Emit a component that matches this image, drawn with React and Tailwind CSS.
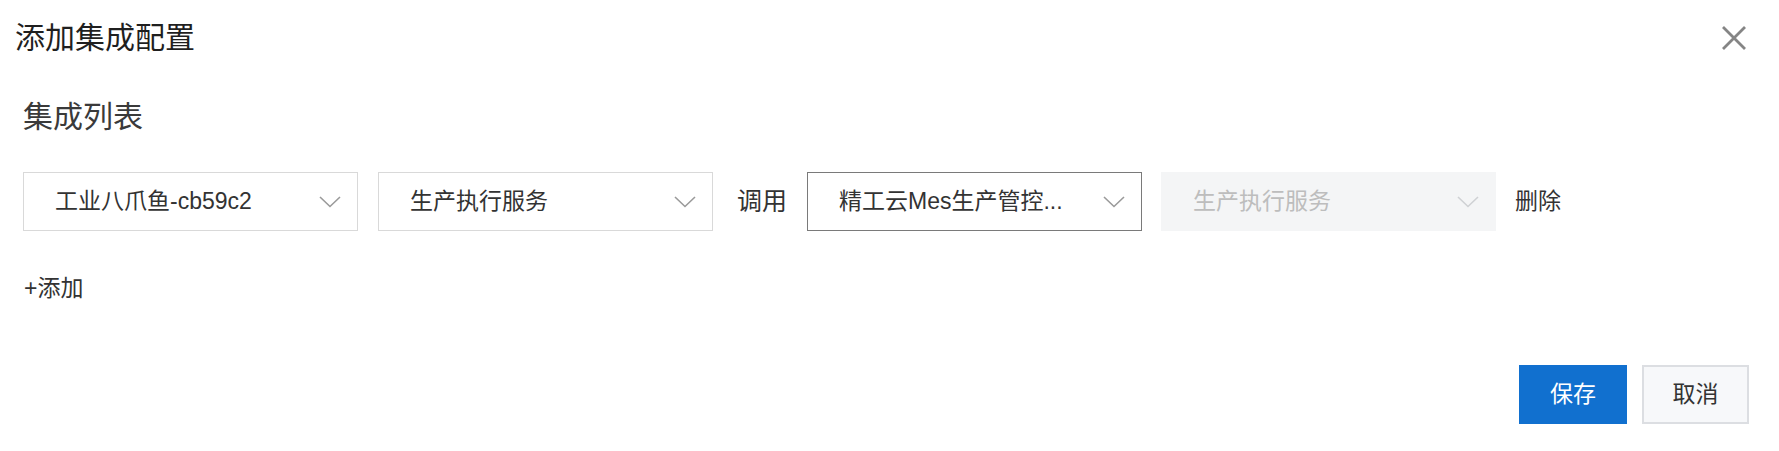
import React from 'react';

const font = { fontFamily: '"Liberation Sans", "Noto Sans CJK SC", sans-serif' };

function Chevron({ disabled }) {
  return (
    <svg width="22" height="12" viewBox="0 0 22 12" fill="none" className="shrink-0">
      <polyline points="1,1 11,10.5 21,1" stroke={disabled ? '#cfd1d4' : '#9a9a9a'} strokeWidth="1.6" />
    </svg>
  );
}

function Select({ value, active, disabled }) {
  return (
    <div
      className={`flex items-center justify-between w-[335px] h-[59px] pl-[31px] pr-[16px] shrink-0 border ${
        disabled ? 'bg-[#f4f5f6] border-[#f4f5f6] text-[#bdbdbd]' : active ? 'bg-white border-[#7a7a7a] text-[#333]' : 'bg-white border-[#d9d9d9] text-[#333]'
      }`}
    >
      <span className="text-[23px] leading-none whitespace-nowrap">{value}</span>
      <Chevron disabled={disabled} />
    </div>
  );
}

export default function App() {
  return (
    <div className="w-full h-[451px] bg-white text-[#333]" style={font}>
      {/* header */}
      <div className="flex items-center justify-between pt-[18px] pl-[15px] pr-[32px]">
        <h1 className="text-[30px] leading-[40px] font-normal text-[#1f1f1f]">添加集成配置</h1>
        <button className="w-[26px] h-[26px] flex items-center justify-center">
          <svg width="26" height="26" viewBox="0 0 26 26">
            <path d="M2 2 L24 24 M24 2 L2 24" stroke="#858585" strokeWidth="2.8" />
          </svg>
        </button>
      </div>

      <div className="pl-[23px] mt-[39px] text-[30px] leading-[40px] text-[#3a3a3a]">集成列表</div>

      {/* integration row */}
      <div className="flex items-center pl-[23px] mt-[35px]">
        <Select value="工业八爪鱼-cb59c2" />
        <div className="ml-[20px]">
          <Select value="生产执行服务" />
        </div>
        <span className="ml-[24px] text-[25px] leading-none text-[#333] whitespace-nowrap">调用</span>
        <div className="ml-[20px]">
          <Select value="精工云Mes生产管控..." active />
        </div>
        <div className="ml-[19px]">
          <Select value="生产执行服务" disabled />
        </div>
        <span className="ml-[19px] text-[23px] leading-none text-[#333] cursor-pointer">删除</span>
      </div>

      <div className="pl-[24px] mt-[42px] text-[23px] leading-[30px] text-[#333] cursor-pointer">+添加</div>

      {/* footer */}
      <div className="flex justify-end gap-[15px] pr-[30px] mt-[62px]">
        <button className="w-[108px] h-[59px] bg-[#1170cf] text-white text-[23px]">保存</button>
        <button className="w-[107px] h-[59px] bg-[#f7f8fa] border-2 border-[#dcdee2] text-[#333] text-[23px]">取消</button>
      </div>
    </div>
  );
}
